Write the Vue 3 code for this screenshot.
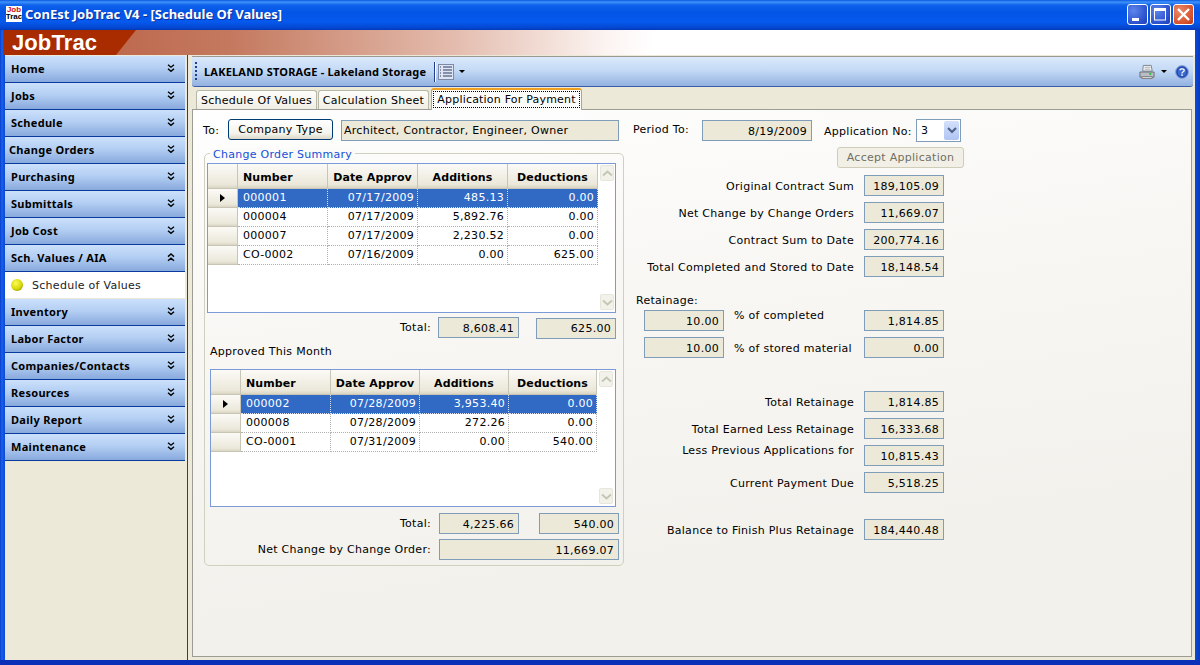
<script setup>
const menuTop = ['Home','Jobs','Schedule','Change Orders','Purchasing','Submittals','Job Cost']
const menuBottom = ['Inventory','Labor Factor','Companies/Contacts','Resources','Daily Report','Maintenance']
const heads = ['Number','Date Approv','Additions','Deductions']
const grid1 = [
  ['000001','07/17/2009','485.13','0.00'],
  ['000004','07/17/2009','5,892.76','0.00'],
  ['000007','07/17/2009','2,230.52','0.00'],
  ['CO-0002','07/16/2009','0.00','625.00'],
]
const grid2 = [
  ['000002','07/28/2009','3,953.40','0.00'],
  ['000008','07/28/2009','272.26','0.00'],
  ['CO-0001','07/31/2009','0.00','540.00'],
]
const grids = [
  { key: 'a', cls: 'grid-a', rows: grid1 },
]
const grids2 = [
  { key: 'b', cls: 'grid-b', rows: grid2 },
]
const sums = [
  { l: 'Original Contract Sum', v: '189,105.09', c: '' },
  { l: 'Net Change by Change Orders', v: '11,669.07', c: '' },
  { l: 'Contract Sum to Date', v: '200,774.16', c: '' },
  { l: 'Total Completed and Stored to Date', v: '18,148.54', c: '' },
]
const dues = [
  { l: 'Total Retainage', v: '1,814.85', c: 'first-due' },
  { l: 'Total Earned Less Retainage', v: '16,333.68', c: '' },
  { l: 'Less Previous Applications for', v: '10,815.43', c: 'up' },
  { l: 'Current Payment Due', v: '5,518.25', c: '' },
  { l: 'Balance to Finish Plus Retainage', v: '184,440.48', c: 'balance' },
]
</script>

<template>
  <div class="window">
    <header class="titlebar">
      <span class="appicon"><b class="ic-red">Job</b><b class="ic-blk">Trac</b></span>
      <span class="title">ConEst JobTrac V4 - [Schedule Of Values]</span>
      <span class="spacer"></span>
      <span class="wbtn">
        <svg width="21" height="21" viewBox="0 0 21 21"><rect x="5" y="14" width="7" height="3" fill="#fff"/></svg>
      </span>
      <span class="wbtn">
        <svg width="21" height="21" viewBox="0 0 21 21"><rect x="4.5" y="5" width="11" height="11" fill="none" stroke="#fff" stroke-width="1"/><rect x="4" y="4" width="12" height="3" fill="#fff"/></svg>
      </span>
      <span class="wbtn close">
        <svg width="21" height="21" viewBox="0 0 21 21"><path d="M5 5l11 11M16 5L5 16" stroke="#fff" stroke-width="2.4" fill="none"/></svg>
      </span>
    </header>

    <div class="band">
      <div class="brand">JobTrac</div>
    </div>

    <div class="main">
      <aside class="side">
        <div class="menu">
          <div v-for="m in menuTop" :key="m" class="mh" :class="{ tight: m === 'Change Orders' }">
            <span>{{ m }}</span>
            <svg class="chev" width="8" height="9" viewBox="0 0 8 9"><path d="M1 .8l3 2.4 3-2.4M1 4.8l3 2.6 3-2.6" fill="none" stroke="#000" stroke-width="1.4"/></svg>
          </div>
          <div class="mh">
            <span>Sch. Values / AIA</span>
            <svg class="chev" width="8" height="9" viewBox="0 0 8 9"><path d="M1 3.6l3-2.6 3 2.6M1 7.8l3-2.6 3 2.6" fill="none" stroke="#000" stroke-width="1.4"/></svg>
          </div>
          <div class="msub"><i class="bullet"></i><span>Schedule of Values</span></div>
          <div v-for="m in menuBottom" :key="m" class="mh">
            <span>{{ m }}</span>
            <svg class="chev" width="8" height="9" viewBox="0 0 8 9"><path d="M1 .8l3 2.4 3-2.4M1 4.8l3 2.6 3-2.6" fill="none" stroke="#000" stroke-width="1.4"/></svg>
          </div>
        </div>
      </aside>

      <section class="content">
        <div class="toolbar">
          <i class="grip"></i>
          <span class="job">LAKELAND STORAGE - Lakeland Storage</span>
          <i class="tsep"></i>
          <span class="listicon">
            <svg width="16" height="16" viewBox="0 0 16 16">
              <rect x=".5" y=".5" width="15" height="15" fill="#dfe6f2" stroke="#7a8aa8"/>
              <path d="M5 3h9M5 6h9M5 9h9M5 12h9" stroke="#2c3a68" stroke-width="1.2"/>
              <path d="M2 3h2M2 6h2M2 9h2M2 12h2" stroke="#2c3a68" stroke-width="1.2" stroke-dasharray="1 1"/>
            </svg>
          </span>
          <i class="caret"></i>
          <span class="spacer"></span>
          <svg class="printer" width="16" height="16" viewBox="0 0 17 16">
            <path d="M4.5 1H13l1 6H4z" fill="#f4f5f8" stroke="#7b8088"/>
            <path d="M6 3h6M6 5h6" stroke="#a8acb4"/>
            <path d="M1 8h15v5.5H1z" fill="#b9bec6" stroke="#666c74"/>
            <path d="M3 13h11v2H3z" fill="#e8eaee" stroke="#777"/>
            <rect x="11" y="9" width="2" height="2" fill="#1fc42a"/>
          </svg>
          <i class="caret c2"></i>
          <svg class="help" width="14" height="14" viewBox="0 0 14 14">
            <circle cx="7" cy="7" r="6.4" fill="#3a68d0" stroke="#8aa4d8"/>
            <circle cx="7" cy="7" r="5" fill="none" stroke="#1c3fa0"/>
            <path d="M5 5.2C5 3.4 9.2 3.4 9.2 5.4 9.2 6.8 7 6.8 7 8.4" fill="none" stroke="#fff" stroke-width="1.3"/>
            <rect x="6.3" y="9.4" width="1.5" height="1.5" fill="#fff"/>
          </svg>
        </div>

        <nav class="tabs">
          <span class="tab t1">Schedule Of Values</span>
          <span class="tab t2">Calculation Sheet</span>
          <span class="tab active"><span class="focus">Application For Payment</span></span>
        </nav>

        <div class="panel">
          <div class="left">
            <div class="torow">
              <span class="tolabel">To:</span>
              <span class="btn companybtn">Company Type</span>
              <span class="field tofield">Architect, Contractor, Engineer, Owner</span>
            </div>

            <div class="group">
              <span class="legend">Change Order Summary</span>

              <div v-for="g in grids" :key="g.key" class="grid" :class="g.cls">
                <div class="gmain">
                  <div class="grow ghead">
                    <span class="corner"></span>
                    <span v-for="(h, i) in heads" :key="h" class="hcell" :class="{ hnum: i === 0 }">{{ h }}</span>
                  </div>
                  <div v-for="(r, ri) in g.rows" :key="r[0]" class="grow gdata" :class="{ sel: ri === 0 }">
                    <span class="rowhead"><i v-if="ri === 0" class="arrow"></i></span>
                    <span v-for="(c, ci) in r" :key="ci" class="cell" :class="{ tl: ci === 0 }">{{ c }}</span>
                  </div>
                </div>
                <div class="scroll">
                  <span class="sbtn"><svg width="11" height="7" viewBox="0 0 11 7"><path d="M1 5.5l4.5-4 4.5 4" fill="none" stroke="#c3c7b4" stroke-width="2"/></svg></span>
                  <span class="sbtn"><svg width="11" height="7" viewBox="0 0 11 7"><path d="M1 1.5l4.5 4 4.5-4" fill="none" stroke="#c3c7b4" stroke-width="2"/></svg></span>
                </div>
              </div>

              <div class="totals t-a">
                <span class="tlabel">Total:</span>
                <span class="field num f1">8,608.41</span>
                <span class="field num f2">625.00</span>
              </div>

              <div class="approved">Approved This Month</div>

              <div v-for="g in grids2" :key="g.key" class="grid" :class="g.cls">
                <div class="gmain">
                  <div class="grow ghead">
                    <span class="corner"></span>
                    <span v-for="(h, i) in heads" :key="h" class="hcell" :class="{ hnum: i === 0 }">{{ h }}</span>
                  </div>
                  <div v-for="(r, ri) in g.rows" :key="r[0]" class="grow gdata" :class="{ sel: ri === 0 }">
                    <span class="rowhead"><i v-if="ri === 0" class="arrow"></i></span>
                    <span v-for="(c, ci) in r" :key="ci" class="cell" :class="{ tl: ci === 0 }">{{ c }}</span>
                  </div>
                </div>
                <div class="scroll">
                  <span class="sbtn"><svg width="11" height="7" viewBox="0 0 11 7"><path d="M1 5.5l4.5-4 4.5 4" fill="none" stroke="#c3c7b4" stroke-width="2"/></svg></span>
                  <span class="sbtn"><svg width="11" height="7" viewBox="0 0 11 7"><path d="M1 1.5l4.5 4 4.5-4" fill="none" stroke="#c3c7b4" stroke-width="2"/></svg></span>
                </div>
              </div>

              <div class="totals t-b">
                <span class="tlabel">Total:</span>
                <span class="field num f1">4,225.66</span>
                <span class="field num f3">540.00</span>
              </div>
              <div class="totals t-c">
                <span class="tlabel">Net Change by Change Order:</span>
                <span class="field num f4">11,669.07</span>
              </div>
            </div>
          </div>

          <div class="right">
            <div class="period">
              <span class="plabel">Period To:</span>
              <span class="field num pfield">8/19/2009</span>
              <span class="alabel">Application No:</span>
              <span class="combo"><span class="cval">3</span><span class="cbtn"><svg width="10" height="7" viewBox="0 0 10 7"><path d="M1 1l4 4 4-4" fill="none" stroke="#4d6185" stroke-width="2"/></svg></span></span>
            </div>
            <span class="btn accept">Accept Application</span>

            <div class="rows">
              <div v-for="s in sums" :key="s.l" class="srow" :class="s.c">
                <span class="slabel">{{ s.l }}</span>
                <span class="field num sfield">{{ s.v }}</span>
              </div>
            </div>

            <div class="retlabel">Retainage:</div>
            <div class="retrow r1">
              <span class="field num rfield">10.00</span>
              <span class="rtext rup">% of completed</span>
              <span class="field num sfield rright">1,814.85</span>
            </div>
            <div class="retrow r2">
              <span class="field num rfield">10.00</span>
              <span class="rtext">% of stored material</span>
              <span class="field num sfield rright">0.00</span>
            </div>

            <div class="rows">
              <div v-for="s in dues" :key="s.l" class="srow" :class="s.c">
                <span class="slabel">{{ s.l }}</span>
                <span class="field num sfield">{{ s.v }}</span>
              </div>
            </div>
          </div>
        </div>
      </section>
    </div>
  </div>
</template>

<style>
html, body { margin: 0; padding: 0; background: #0a46d8; }
</style>

<style scoped>
.window {
  width: 1200px; height: 665px; box-sizing: border-box; overflow: hidden;
  display: flex; flex-direction: column;
  background: linear-gradient(90deg, #0a3fc8 0, #1a62ee 2px, #0c4ddc 4px, #0a4ade 1195px, #0a3ab8 1200px);
  font: 11px "DejaVu Sans", Verdana, sans-serif; letter-spacing: .28px; color: #000;
  border-bottom: 5px solid #0a30b8;
}
.titlebar {
  height: 30px; flex: none; display: flex; align-items: center; padding: 0 6px 2px 6px; box-sizing: border-box;
  background: linear-gradient(180deg, #0a58e0 0, #3f93fa 2px, #0f62ea 5px, #0355e6 12px, #0559ec 22px, #0546d0 28px, #0338b8 30px);
}
.appicon {
  width: 16px; height: 16px; background: #fff; display: flex; flex-direction: column; align-items: center;
  font: bold 8px/7px "Liberation Sans", sans-serif; letter-spacing: 0; overflow: hidden;
}
.ic-red { color: #d01010; }
.ic-blk { color: #000; }
.title {
  margin-left: 3px; color: #fff; font: bold 13px "Noto Sans", sans-serif; letter-spacing: 0;
  text-shadow: 1px 1px 0 #0a2f9c;
}
.spacer { flex: 1; }
.wbtn {
  width: 21px; height: 21px; margin-left: 2px; border: 1px solid #fff; border-radius: 3px; box-sizing: border-box;
  background: radial-gradient(circle at 30% 30%, #5f85ec, #2a50cc 70%, #2040b8);
  display: flex; align-items: center; justify-content: center; overflow: hidden;
}
.wbtn svg { flex: none; }
.close { background: radial-gradient(circle at 30% 30%, #ea8a6a, #d6502a 70%, #b83a18); }
.band {
  height: 25px; flex: none; margin: 0 5px 0 4px;
  background: linear-gradient(90deg, #b85a3e 0, #c47a60 230px, #e4bcae 450px, #fbf3f0 600px, #fff 650px);
}
.brand {
  width: 132px; height: 25px; background: #a82c00; color: #fff; box-sizing: border-box; padding-left: 8px;
  font: bold 22px/25px "Liberation Sans", sans-serif; letter-spacing: .1px;
  clip-path: polygon(0 0, 132px 0, 112px 25px, 0 25px);
}
.main { flex: 1; min-height: 0; display: flex; margin: 0 5px; background: #ece9d8; }
.side {
  width: 182px; flex: none; background: #ece9d8; border-right: 1px solid #1a3f9c;
  padding-top: 1px;
}
.menu { width: 180px; }
.mh {
  height: 26px; border-bottom: 1px solid #0a3a9c; display: flex; align-items: center; justify-content: space-between;
  padding: 0 10px 0 6px;
  background: linear-gradient(180deg, #cbe0fb 0, #b4cff3 45%, #88a9dd 100%);
  font: bold 11px "Noto Sans", sans-serif; letter-spacing: .3px; color: #000;
}
.tight { padding-left: 4px; }
.mh span { position: relative; top: -1px; }
.chev { position: relative; top: -1px; }
.msub {
  height: 27px; background: #fff; border-bottom: 1px solid #ece9d8; box-sizing: border-box;
  display: flex; align-items: center; padding-left: 6px; color: #222;
}
.bullet {
  width: 12px; height: 12px; border-radius: 50%; margin-right: 9px; flex: none;
  background: radial-gradient(circle at 40% 35%, #fbfb60, #d8d800 55%, #6a6a00 100%);
}
.content { flex: 1; min-width: 0; display: flex; flex-direction: column; padding-left: 4px; padding-top: 1px; box-sizing: border-box; }
.toolbar {
  height: 31px; flex: none; margin-right: 2px; display: flex; align-items: center; box-sizing: border-box; padding-left: 3px;
  border-top: 1px solid #9a9a90; border-bottom: 1px solid #3a5fa8; border-radius: 0 0 3px 3px;
  background: linear-gradient(180deg, #dbe9fb 0, #c4daf6 45%, #93b2e0 100%);
}
.grip { width: 2px; height: 20px; background: repeating-linear-gradient(180deg, #1f3f8c 0 2px, transparent 2px 4px); margin-right: 7px; }
.job { font: bold 11px "Noto Sans", sans-serif; letter-spacing: .2px; }
.tsep { width: 1px; height: 20px; background: #1f3f8c; margin: 0 3px 0 8px; box-shadow: 1px 0 0 #fff; }
.listicon { display: flex; margin-right: 5px; }
.caret { width: 0; height: 0; border: 3px solid transparent; border-top: 3px solid #000; border-bottom: 0; }
.printer { margin-right: 6px; }
.c2 { margin-right: 8px; }
.help { margin-right: 4px; }
.tabs {
  height: 22px; flex: none; display: flex; align-items: flex-end; padding-left: 4px; gap: 1px;
}
.tab {
  height: 19px; box-sizing: border-box; border: 1px solid #b8b8a8; border-bottom: 0; border-radius: 3px 3px 0 0;
  background: linear-gradient(180deg, #fdfdfb, #f0eee4); padding: 0 4px; display: flex; align-items: center; justify-content: center;
  white-space: nowrap;
}
.t1 { width: 121px; }
.t2 { width: 111px; }
.active {
  width: 151px; height: 22px; background: #fcfcfa; border-top: 2px solid #f0a020; border-color: #f0a020 #a8a898 #fcfcfa;
  margin-left: 1px; margin-bottom: -1px; position: relative; z-index: 1; padding: 0 2px 1px;
}
.focus { border: 1px dotted #000; padding: 1px 3px; white-space: nowrap; letter-spacing: .2px; }
.panel {
  flex: 1; min-height: 0; display: flex; margin: 0 3px 3px 0; border: 1px solid #9c9c94; box-sizing: border-box;
  background: linear-gradient(172deg, #fefefe 0, #f8f7f4 35%, #f2f1ec 75%);
}
.left { width: 430px; flex: none; padding-left: 10px; box-sizing: border-box; }
.torow { display: flex; align-items: center; height: 21px; margin-top: 9px; }
.tolabel { width: 25px; flex: none; padding-top: 2px; }
.field {
  display: flex; align-items: center; height: 21px; box-sizing: border-box; border: 1px solid #7f9db9; background: #ece9d8;
  padding: 1px 4px 0; white-space: nowrap; overflow: hidden;
}
.num { justify-content: flex-end; }
.btn {
  display: flex; align-items: center; justify-content: center; height: 21px; box-sizing: border-box; white-space: nowrap;
  border: 1px solid #003c74; border-radius: 3px; background: linear-gradient(180deg, #fff, #f4f3ec 70%, #dcd8c8);
}
.companybtn { width: 105px; margin-right: 8px; }
.tofield { width: 278px; margin-top: 1px; padding-left: 2px; }
.group {
  position: relative; width: 420px; height: 413px; margin: 13px 0 0 1px; box-sizing: border-box;
  border: 1px solid #d0d0bf; border-radius: 5px; padding: 9px 0 0 2px;
}
.legend { position: absolute; left: 5px; top: -6px; padding: 0 3px; color: #1450d8; background: #fbfbf9; line-height: 13px; }
.grid { display: flex; box-sizing: border-box; border: 1px solid #7a9ad8; background: #fff; }
.grid-a { width: 409px; height: 150px; }
.grid-b { width: 406px; height: 138px; margin-left: 3px; }
.gmain { flex: none; }
.grid-a .gmain { width: 390px; }
.grid-b .gmain { width: 386px; }
.grow { display: grid; }
.grid-a .grow { grid-template-columns: 30px 90px 90px 90px 90px; }
.grid-b .grow { grid-template-columns: 30px 90px 89px 89px 88px; }
.ghead { height: 25px; }
.gdata { height: 19px; box-sizing: border-box; }
.corner, .hcell, .rowhead {
  background: linear-gradient(180deg, #fbfaf6, #ebe8da 85%, #d8d5c4);
  border-right: 1px solid #c8c5b4; border-bottom: 1px solid #c8c5b4; box-sizing: border-box;
}
.hcell {
  display: flex; align-items: center; justify-content: center; font: bold 11px "DejaVu Sans", sans-serif; letter-spacing: .1px;
  padding-top: 3px; white-space: nowrap; overflow: hidden;
}
.hnum { justify-content: flex-start; padding-left: 5px; }
.rowhead { display: flex; align-items: center; justify-content: center; }
.arrow { width: 0; height: 0; border: 4px solid transparent; border-left: 5px solid #000; border-right: 0; }
.cell {
  display: flex; align-items: center; justify-content: flex-end; padding: 0 3px 1px 0; box-sizing: border-box;
  border-right: 1px dotted #b0b0b0; border-bottom: 1px dotted #b0b0b0; white-space: nowrap;
}
.tl { justify-content: flex-start; padding-left: 5px; }
.sel .cell { background: #316ac5; color: #fff; border-color: #d8e0f0; }
.scroll { flex: 1; display: flex; flex-direction: column; justify-content: space-between; padding: 1px 1px 2px 2px; }
.sbtn {
  width: 14px; height: 16px; display: flex; align-items: center; justify-content: center; box-sizing: border-box;
  border: 1px solid #e6e6da; border-radius: 2px; background: #f3f2ea;
}
.totals { display: flex; align-items: center; height: 21px; }
.tlabel { width: 224px; flex: none; text-align: right; margin-right: 7px; white-space: nowrap; }
.t-a { margin-top: 4px; }
.f1 { width: 81px; }
.f2 { width: 80px; margin: 1px 0 0 17px; }
.f3 { width: 80px; margin-left: 20px; }
.f4 { width: 180px; }
.t-b .tlabel, .t-c .tlabel { margin-right: 8px; }
.t-b .f1 { width: 80px; }
.approved { height: 13px; line-height: 13px; margin: 7px 0 11px 3px; }
.t-b { margin-top: 6px; }
.t-c { margin-top: 5px; }
.right { width: 340px; flex: none; padding-left: 10px; box-sizing: border-box; }
.period { display: flex; align-items: center; height: 23px; margin-top: 9px; }
.plabel { width: 69px; flex: none; position: relative; top: -1px; }
.pfield { width: 110px; flex: none; }
.alabel { margin-left: 12px; width: 92px; flex: none; white-space: nowrap; padding-top: 2px; }
.combo {
  width: 45px; height: 23px; flex: none; box-sizing: border-box; border: 1px solid #7f9db9; background: #fff;
  display: flex; align-items: center; justify-content: space-between; padding: 1px;
}
.cval { padding-left: 3px; }
.cbtn {
  width: 15px; height: 19px; background: linear-gradient(180deg, #d4e0fb, #b0c4f4); border-radius: 2px;
  display: flex; align-items: center; justify-content: center;
}
.accept {
  width: 127px; margin: 5px 0 0 204px; color: #6f6f62; border-color: #cfcdb8;
  background: #f2f0e6;
}
.rows { display: flex; flex-direction: column; }
.srow { display: flex; align-items: center; height: 21px; margin-top: 6px; }
.srow:first-child { margin-top: 7px; }
.slabel { width: 221px; flex: none; text-align: right; margin-right: 10px; white-space: nowrap; padding-top: 1px; }
.sfield { width: 80px; flex: none; }
.retlabel { height: 13px; line-height: 13px; margin: 17px 0 3px 3px; }
.retrow { display: flex; align-items: center; height: 21px; }
.r2 { margin-top: 6px; }
.rfield { width: 80px; margin-left: 11px; flex: none; }
.rtext { width: 130px; flex: none; margin-left: 10px; white-space: nowrap; padding-top: 2px; }
.rup { position: relative; top: -6px; }
.srow.first-due:first-child { margin-top: 33px; }
.up .slabel { position: relative; top: -6px; }
.balance { margin-top: 26px; }
</style>
